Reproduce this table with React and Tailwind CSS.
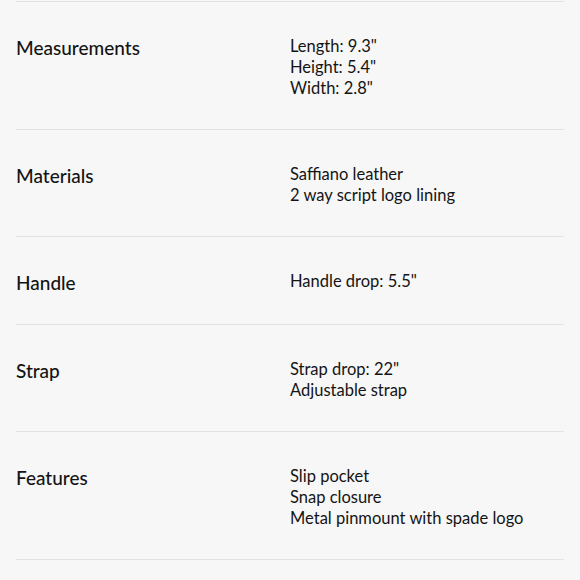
const specs = [
  { label: "Measurements", values: ['Length: 9.3"', 'Height: 5.4"', 'Width: 2.8"'] },
  { label: "Materials", values: ["Saffiano leather", "2 way script logo lining"] },
  { label: "Handle", values: ['Handle drop: 5.5"'] },
  { label: "Strap", values: ['Strap drop: 22"', "Adjustable strap"] },
  { label: "Features", values: ["Slip pocket", "Snap closure", "Metal pinmount with spade logo"] },
];

export default function App() {
  return (
    <div
      className="min-h-[580px] bg-[#f7f7f7] px-4 pt-px text-[#141414]"
      style={{ fontFamily: "Lato, 'Noto Sans', sans-serif" }}
    >
      <div className="border-t border-[#e2e2e2]">
        {specs.map((row) => (
          <div
            key={row.label}
            className="grid grid-cols-2 border-b border-[#e2e2e2] pt-[34px] pb-[30px]"
          >
            <div className="text-[19px] font-medium leading-[23px]">{row.label}</div>
            <div className="text-[16.5px] leading-[21px]">
              {row.values.map((v) => (
                <div key={v}>{v}</div>
              ))}
            </div>
          </div>
        ))}
      </div>
    </div>
  );
}
